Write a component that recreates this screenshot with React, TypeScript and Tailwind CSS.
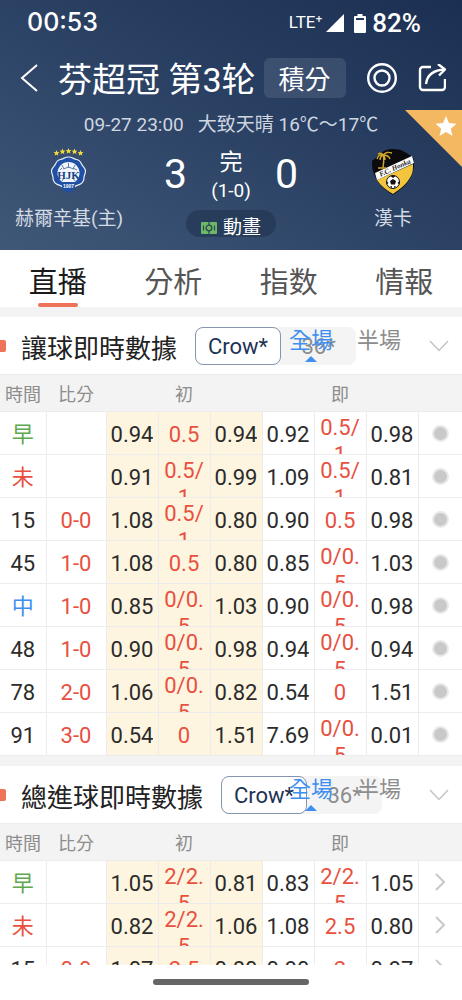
import { useState } from 'react';
import type { ReactNode } from 'react';
import clsx from 'clsx';

type Row = { time: string; score: string; odds: string[] };

const handicapRows: Row[] = [
    { time: '早', score: '', odds: ['0.94', '0.5', '0.94', '0.92', '0.5/1', '0.98'] },
    { time: '未', score: '', odds: ['0.91', '0.5/1', '0.99', '1.09', '0.5/1', '0.81'] },
    { time: '15', score: '0-0', odds: ['1.08', '0.5/1', '0.80', '0.90', '0.5', '0.98'] },
    { time: '45', score: '1-0', odds: ['1.08', '0.5', '0.80', '0.85', '0/0.5', '1.03'] },
    { time: '中', score: '1-0', odds: ['0.85', '0/0.5', '1.03', '0.90', '0/0.5', '0.98'] },
    { time: '48', score: '1-0', odds: ['0.90', '0/0.5', '0.98', '0.94', '0/0.5', '0.94'] },
    { time: '78', score: '2-0', odds: ['1.06', '0/0.5', '0.82', '0.54', '0', '1.51'] },
    { time: '91', score: '3-0', odds: ['0.54', '0', '1.51', '7.69', '0/0.5', '0.01'] },
];

const totalRows: Row[] = [
    { time: '早', score: '', odds: ['1.05', '2/2.5', '0.81', '0.83', '2/2.5', '1.05'] },
    { time: '未', score: '', odds: ['0.82', '2/2.5', '1.06', '1.08', '2.5', '0.80'] },
    { time: '15', score: '0-0', odds: ['1.07', '2.5', '0.80', '0.90', '2', '0.97'] },
];

const timeColors: Record<string, string> = {
    早: 'text-[#5fa850]',
    未: 'text-[#e8503f]',
    中: 'text-[#3f8fee]',
};

function StatusBar() {
    return (
        <div className="flex h-[46px] items-center justify-between pr-[41px] pl-[27px]">
            <span className="font-[Inter,sans-serif] text-[25px] font-medium">00:53</span>
            <div className="flex items-center">
                <span className="mr-1 text-[17px]">LTE⁺</span>
                <svg width="18" height="18" viewBox="0 0 18 18" className="mr-[10px]" fill="currentColor">
                    <path d="M18 0v18H0z" />
                </svg>
                <svg width="12" height="19" viewBox="0 0 12 19" className="mr-[6px]" fill="currentColor">
                    <path d="M3.500 0h5v2H11a1 1 0 0 1 1 1v15a1 1 0 0 1-1 1H1a1 1 0 0 1-1-1V3a1 1 0 0 1 1-1h2.500z" />
                    <path d="M2 4h8v2H2z" fill="#233a5c" />
                </svg>
                <span className="text-[26px] font-medium">82%</span>
            </div>
        </div>
    );
}

function HomeCrest() {
    return (
        <svg width="40" height="48" viewBox="0 0 40 48">
            {[7, 13, 19, 25, 31].map((x, i) => (
                <path
                    key={x}
                    transform={`translate(${x + 0.5} ${[5, 3.5, 3, 3.5, 5][i]})`}
                    d="M0-3 .8-1 3-.8 1.300.6 1.900 2.700 0 1.500-1.900 2.700-1.300.6-3-.8-.8-1z"
                    fill="#f3dc3c"
                />
            ))}
            <path
                d="M19.500 8c4 0 5 2 8 2.500s4 2 5 4.500 4 4 4 7-1.500 4-1.500 6.500-1 5-3.500 6.500-4 1-6 3-3.500 3.500-6 4c-2.500-.5-4-2-6-4s-3.500-1.500-6-3-3.500-4-3.500-6.500-1.500-3.500-1.500-6.500 3-4.500 4-7 2-4 5-4.500 4-2.500 8-2.500z"
                transform="translate(0 1)"
                fill="#1f50a6"
                stroke="#e8edf5"
                strokeWidth="1.200"
            />
            <circle cx="19.500" cy="25" r="11" fill="#f1f4f8" />
            <path
                d="M19.500 15v5m-5 1 5-2 5 2M13 20l-2 2m13-2 4 2M13 17l2 4m11-4-2 4m-9 9-2 3m11-3 2 3"
                fill="none"
                stroke="#5f7db2"
                strokeWidth="1"
            />
            <text x="19.500" y="31" textAnchor="middle" fontSize="11" fontWeight="bold" fontFamily="Liberation Serif, serif" fill="#173f86">
                HJK
            </text>
            <path d="M13 34h13v7l-6.500 4-6.500-4z" fill="#1f50a6" />
            <text x="19.500" y="40" textAnchor="middle" fontSize="5" fontWeight="bold" fontFamily="Liberation Sans, sans-serif" fill="#fff">
                1907
            </text>
        </svg>
    );
}

function AwayCrest() {
    return (
        <svg width="44" height="48" viewBox="0 0 44 48">
            <path d="M1 13C7 10 9 1 22 1c11 0 14 5 20 8 2 6 1 14-2 20-4 8-11 13-18 18C14 42 7 36 4 28 1 22 1 18 1 13z" fill="#0b0b0d" />
            <path d="M6 32 42 16c0 5 0 8-2 12-4 8-11 13-18 18-7-4-12-8-16-14z" fill="#f2c53d" />
            <path d="m4 25 37-17 2 7L6 32z" fill="#fff" />
            <text
                x="24"
                y="22"
                textAnchor="middle"
                fontSize="7"
                fontWeight="bold"
                fontStyle="italic"
                fontFamily="Liberation Serif, serif"
                transform="rotate(-24 24 20)"
                fill="#161616"
            >
                F.C. Honka
            </text>
            <path
                d="M12 20c1-5 1-8 .5-14M12 7C9 6 7 8 6 11m6-4c-1-2-3-2-5-1m5 1c3-3 5-3 9-2m-9 2c3 0 6 1 7 4m-7-4c2 1 2 3 2 5m-2-5c-2 1-3 3-3 5m-2 8h8"
                fill="none"
                stroke="#cfa72e"
                strokeWidth="1.400"
            />
            <circle cx="22" cy="34" r="6.500" fill="#fff" stroke="#111" strokeWidth="1" />
            <path
                d="m22 31 3 2-1 3.500h-4L19 33zM22 27.500l2.500.5L22 30l-2.500-2zM28.500 33v3.500L26.500 35zM15.500 33v3.500l2-1.500zM25 38.500l-1.500 2L23 38zM19 38.500l1.500 2L21 38z"
                fill="#111"
            />
        </svg>
    );
}

function Team({ name, children }: { name: string; children: ReactNode }) {
    return (
        <div className="flex flex-col items-center pt-2">
            {children}
            <span className="mt-[10px] text-[19px] leading-[26px] text-[#d4dae3]">{name}</span>
        </div>
    );
}

function MatchHeader() {
    return (
        <header className="relative h-[250px] shrink-0 bg-linear-to-tr from-[#405878] via-[#2b4265] to-[#1b2f52] text-white">
            <StatusBar />
            <div className="flex h-16 items-center pr-4 pl-5">
                <button aria-label="返回">
                    <svg width="18" height="28" viewBox="0 0 18 28" fill="none" stroke="currentColor" strokeWidth="2">
                        <path d="M17 1 2 14l15 13" />
                    </svg>
                </button>
                <h1 className="ml-5 pt-1 text-[34px] leading-10 whitespace-nowrap">芬超冠 第3轮</h1>
                <button className="ml-2 h-10 rounded-md bg-white/10 px-[15px] pt-1 text-[26px] leading-9 whitespace-nowrap">積分</button>
                <div className="ml-auto flex items-center gap-5">
                    <button aria-label="關注">
                        <svg width="32" height="32" viewBox="0 0 32 32" fill="none" stroke="currentColor" strokeWidth="2.400">
                            <circle cx="16" cy="16" r="13.800" />
                            <circle cx="16" cy="16" r="7.500" />
                        </svg>
                    </button>
                    <button aria-label="分享">
                        <svg width="28" height="28" viewBox="0 0 28 28" fill="none" stroke="currentColor" strokeWidth="2.400" strokeLinejoin="round">
                            <path d="M13 3H5a3 3 0 0 0-3 3v17a3 3 0 0 0 3 3h19a3 3 0 0 0 3-3v-8" />
                            <path d="M8 20C9 12 14 6 27 5.500M20 0l7 5.500-6 6" />
                        </svg>
                    </button>
                </div>
            </div>
            <p className="flex h-[30px] items-center justify-center gap-[14px] pt-px text-[19px] text-[#cfd6e0]">
                <span>09-27 23:00</span>
                <span>大致天晴 16℃～17℃</span>
            </p>
            <div className="grid grid-cols-[138px_1fr_138px]">
                <Team name="赫爾辛基(主)">
                    <HomeCrest />
                </Team>
                <div className="flex flex-col items-center">
                    <div className="flex h-[70px] items-center justify-center gap-6">
                        <span className="text-[41px]">3</span>
                        <div className="flex w-10 flex-col items-center whitespace-nowrap pt-1">
                            <span className="text-[23px] leading-7">完</span>
                            <span className="text-[19px] leading-7">(1-0)</span>
                        </div>
                        <span className="text-[41px]">0</span>
                    </div>
                    <button className="flex h-[27px] items-center gap-[6px] overflow-hidden rounded-full bg-[#20344f]/60 px-[15px] pt-2 text-[19px] leading-[27px]">
                        <svg width="16" height="12" viewBox="0 0 16 12">
                            <rect width="16" height="12" rx="1" fill="#6fb768" />
                            <path d="M8 0v12M2.500 3.500v5m11-5v5" stroke="#2c4a4e" strokeWidth="1.200" />
                            <circle cx="8" cy="6" r="2.800" fill="#6fb768" stroke="#2c4a4e" strokeWidth="1.300" />
                        </svg>
                        動畫
                    </button>
                </div>
                <Team name="漢卡">
                    <AwayCrest />
                </Team>
            </div>
            <button aria-label="收藏" className="absolute top-[110px] right-0">
                <svg width="57" height="57" viewBox="0 0 57 57">
                    <path d="M0 0h57v57z" fill="#f4b762" />
                    <path d="m41 6 3 7 7.500.7-5.700 5 1.700 7.300-6.500-3.900-6.500 3.900 1.700-7.300-5.700-5 7.500-.7z" fill="#fff" />
                </svg>
            </button>
        </header>
    );
}

function OddsSection({ title, rows, trailing }: { title: string; rows: Row[]; trailing: 'dot' | 'arrow' }) {
    const [company, setCompany] = useState('Crow*');
    const [period, setPeriod] = useState('全場');

    return (
        <section className="border-t-10 border-[#f3f3f3]">
            <div className="relative flex h-[57px] items-center">
                <span className="h-3 w-[6px] rounded-r-xs bg-[#ee7358]" />
                <h2 className="ml-[15px] pt-[6px] text-[26px] leading-9 whitespace-nowrap text-[#222]">{title}</h2>
                <div className="ml-[18px] flex h-[38px] rounded-lg bg-[#f4f4f4] text-[22px]">
                    {['Crow*', '36*'].map((c) => (
                        <button
                            key={c}
                            onClick={() => setCompany(c)}
                            className={clsx(
                                'rounded-lg border pt-px',
                                c === 'Crow*' ? 'w-[86px]' : 'w-[75px]',
                                c === company ? 'border-[#8595ad] bg-white text-[#1c3354]' : 'border-transparent text-[#8d8d8d]',
                            )}
                        >
                            {c}
                        </button>
                    ))}
                </div>
                <div className="absolute top-[9px] right-[61px] flex gap-6 text-[22px] leading-[30px]">
                    {['全場', '半場'].map((p) => (
                        <button
                            key={p}
                            onClick={() => setPeriod(p)}
                            className={clsx('flex flex-col items-center', p === period ? 'text-[#3f8fee]' : 'text-[#8d8d8d]')}
                        >
                            {p}
                            {p === period && (
                                <svg width="12" height="6" viewBox="0 0 12 6" fill="currentColor">
                                    <path d="m6 0 6 6H0z" />
                                </svg>
                            )}
                        </button>
                    ))}
                </div>
                <button aria-label="收起" className="absolute top-[23px] right-[13px]">
                    <svg width="20" height="12" viewBox="0 0 20 12" fill="none" stroke="#c4c4c4" strokeWidth="1.500">
                        <path d="m1 1 9 9.500L19 1" />
                    </svg>
                </button>
            </div>
            <table className="w-full table-fixed border-collapse text-center text-[22px]">
                <colgroup>
                    <col className="w-[46px]" />
                    <col className="w-[60px]" />
                    <col className="w-[52px]" span={6} />
                    <col className="w-[44px]" />
                </colgroup>
                <thead>
                    <tr className="h-[37px] border-y border-[#ececec] bg-[#f3f3f3] text-[18px] text-[#8d8d8d]">
                        <th className="pt-[3px] font-normal whitespace-nowrap">時間</th>
                        <th className="pt-[3px] font-normal">比分</th>
                        <th className="pt-[3px] font-normal" colSpan={3}>
                            初
                        </th>
                        <th className="pt-[3px] font-normal" colSpan={3}>
                            即
                        </th>
                        <th />
                    </tr>
                </thead>
                <tbody>
                    {rows.map((row) => (
                        <tr key={row.time} className="border-b border-[#ececec] text-[#2b2b2b]">
                            <td className={clsx('border-r border-[#ececec] p-0 pt-[2px]', timeColors[row.time])}>{row.time}</td>
                            <td className="border-r border-[#ececec] p-0 pt-[2px] text-[#e8503f]">{row.score}</td>
                            {row.odds.map((value, i) => (
                                <td key={i} className={clsx('border-r border-[#ececec] p-0', i < 3 && 'bg-[#fdf5e0]', i % 3 === 1 && 'text-[#e8503f]')}>
                                    <div className="flex h-[42px] items-center justify-center pt-[2px]">
                                        <span className={clsx('max-h-full overflow-hidden leading-[27px]', i % 3 === 1 && 'w-11 break-all')}>{value}</span>
                                    </div>
                                </td>
                            ))}
                            <td className="p-0">
                                {trailing === 'dot' ? (
                                    <span className="mx-auto block size-[17px] rounded-full border-2 border-[#e9e9e9] bg-[#c9c9c9]" />
                                ) : (
                                    <svg width="10" height="18" viewBox="0 0 10 18" fill="none" stroke="#c9c9c9" strokeWidth="2" className="mx-auto">
                                        <path d="m1 1 8 8-8 8" />
                                    </svg>
                                )}
                            </td>
                        </tr>
                    ))}
                </tbody>
            </table>
        </section>
    );
}

export default function App() {
    const [tab, setTab] = useState('直播');

    return (
        <div lang="zh-Hant" className="flex h-screen flex-col overflow-hidden bg-white font-[Roboto,'Noto_Sans_CJK_TC',sans-serif]">
            <MatchHeader />
            <nav className="grid shrink-0 grid-cols-4">
                {['直播', '分析', '指数', '情報'].map((t) => (
                    <button
                        key={t}
                        onClick={() => setTab(t)}
                        className={clsx('flex h-[57px] flex-col items-center justify-end text-[29px]', t === tab ? 'text-[#1a1a1a]' : 'text-[#555]')}
                    >
                        <span className="leading-10">{t}</span>
                        <span className={clsx('h-1 w-10 rounded-full', t === tab && 'bg-[#ee7358]')} />
                    </button>
                ))}
            </nav>
            <main className="min-h-0 flex-1 overflow-hidden">
                <OddsSection title="讓球即時數據" rows={handicapRows} trailing="dot" />
                <OddsSection title="總進球即時數據" rows={totalRows} trailing="arrow" />
            </main>
            <footer className="flex h-[35px] shrink-0 justify-center bg-white pt-[14px]">
                <div className="h-[6px] w-[156px] rounded-full bg-[#666]" />
            </footer>
        </div>
    );
}
